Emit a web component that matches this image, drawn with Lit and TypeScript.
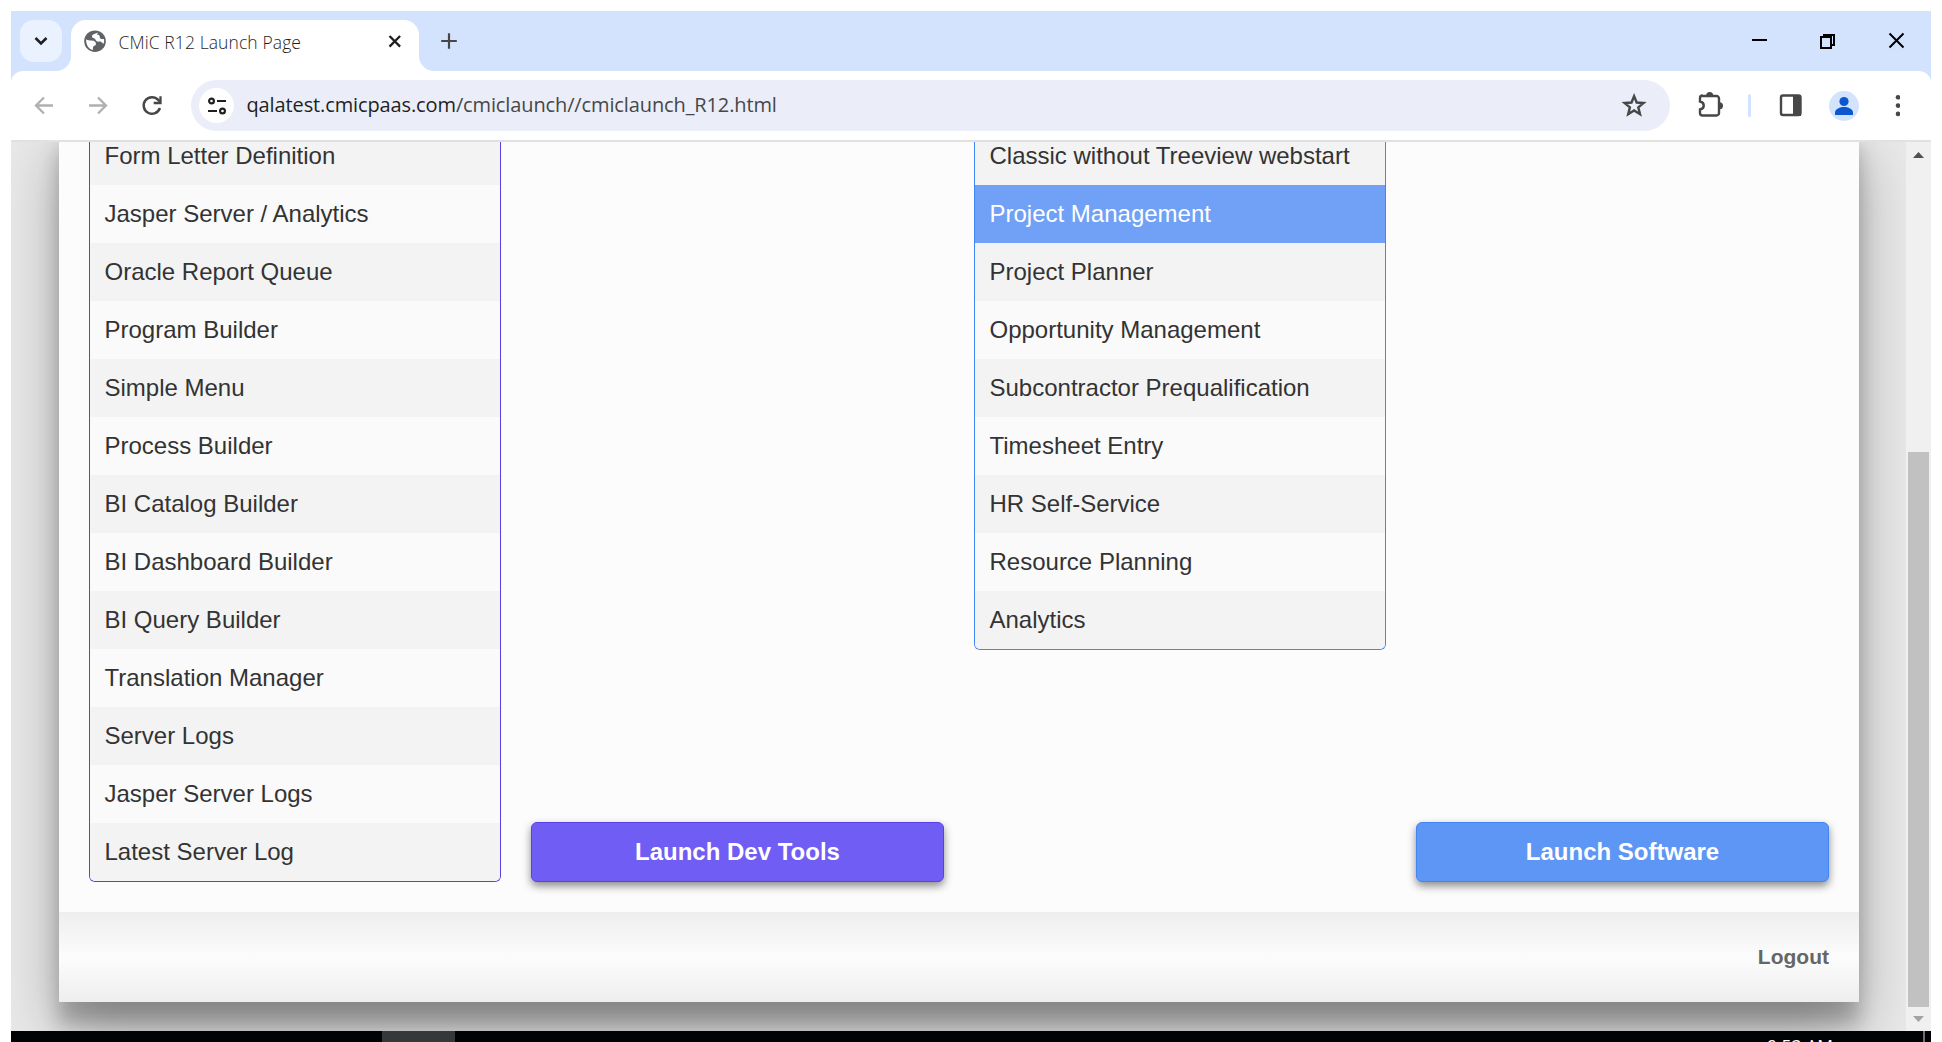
import { LitElement, html, css } from "lit";
import { customElement, property } from "lit/decorators.js";
import { classMap } from "lit/directives/class-map.js";

@customElement("option-list")
class OptionList extends LitElement {
  @property({ attribute: false }) items: string[] = [];
  @property() selected = "";
  @property() tone = "violet";

  static styles = css`
    :host { display: block; }
    .list {
      border: 1px solid #5b40ea;
      border-radius: 0 0 6px 6px;
      border-top: 0;
      overflow: hidden;
      width: 412px;
      box-sizing: border-box;
    }
    .list.blue { border-color: #4285f4; }
    .row {
      height: 58px;
      line-height: 58px;
      padding-left: 14.5px;
      background: #fafafa;
      color: #333;
      font-size: 24px;
      white-space: nowrap;
    }
    .row:nth-child(odd) { background: #f3f3f3; }
    .row.active { background: #70a1f6; color: #fff; }
  `;

  render() {
    return html`<div class=${classMap({ list: true, blue: this.tone === "blue" })}>
      ${this.items.map(
        (t) => html`<div class=${classMap({ row: true, active: t === this.selected })}>${t}</div>`
      )}
    </div>`;
  }
}

@customElement("browser-chrome")
class BrowserChrome extends LitElement {
  static styles = css`
    :host { display: block; font-family: "Open Sans", "Noto Sans", sans-serif; }
    svg { display: block; flex: none; }
    .strip {
      height: 60px;
      background: #d3e3fd;
      display: flex;
      align-items: flex-start;
    }
    .search {
      width: 42px;
      height: 42px;
      margin: 9px 9px 0 9px;
      border-radius: 14px;
      background: #ebf2ff;
      flex: none;
    }
    .tab {
      position: relative;
      width: 348px;
      height: 51px;
      margin-top: 9px;
      background: #fff;
      border-radius: 15px 15px 0 0;
      display: flex;
      align-items: flex-start;
      flex: none;
      box-sizing: border-box;
      padding: 10px 15px 0 12px;
    }
    .tab::before,
    .tab::after {
      content: "";
      position: absolute;
      bottom: 0;
      width: 15px;
      height: 15px;
    }
    .tab::before { left: -15px; background: radial-gradient(circle at 0 0, transparent 14.5px, #fff 15.5px); }
    .tab::after { right: -15px; background: radial-gradient(circle at 100% 0, transparent 14.5px, #fff 15.5px); }
    .title {
      margin: 0 0 0 11.500px;
      font-size: 17.5px;
      line-height: 24px;
      font-weight: 300;
      letter-spacing: 0.1px;
      color: #1f1f1f;
      white-space: nowrap;
      flex: 1;
    }
    .close { margin-top: 3px; }
    .plus { margin: 21px 0 0 21px; }
    .grow { flex: 1; }
    .win { margin-top: 21px; }
    .corner { background: #d3e3fd; }
    .toolbar {
      height: 69px;
      background: #fff;
      border-radius: 12px 12px 0 0;
      border-bottom: 2px solid #e1e1e1;
      display: flex;
      align-items: flex-start;
    }
    .nav { margin-top: 20px; display: flex; padding-left: 18px; gap: 24px; width: 162px; }
    .omni {
      width: 1479px;
      height: 51px;
      margin-top: 9px;
      background: #ebeef8;
      border-radius: 26px;
      display: flex;
      align-items: center;
      box-sizing: border-box;
      padding: 0 22px 0 8px;
      flex: none;
    }
    .chip {
      width: 35px;
      height: 35px;
      border-radius: 50%;
      background: #fff;
      display: flex;
      align-items: center;
      justify-content: center;
    }
    .url {
      margin: -2px 0 0 12.5px;
      flex: 1;
      font-size: 20px;
      line-height: 30px;
      color: #474747;
      white-space: nowrap;
      letter-spacing: -0.12px;
    }
    .host { color: #1f1f1f; }
    .tools { display: flex; margin-top: 20px; }
  `;

  render() {
    return html`
      <div class="strip">
        <div class="search">
          <svg width="42" height="42" viewBox="0 0 42 42"><path d="M15.500 18l5.500 5.500 5.500-5.500" fill="none" stroke="#1f1f1f" stroke-width="2.600" /></svg>
        </div>
        <div class="tab">
          <svg width="24" height="24" viewBox="0 0 24 24">
            <circle cx="12" cy="11.200" r="10.800" fill="#5f6368" />
            <path d="M14.500 2.500c-1 1.200-4.600 1.300-5.400 3.200-.4 1.500.6 2.300 1.900 2.500 1.500.2 1.500 2.300 2.700 3.100 1.600.9 3.300-.2 4.700.6 1 .6.900 1.500 2.200 1.600.6-1.400.7-2.900.4-4.300-.8-.6-2.400.2-3.600-.8-1.200-.9-.2-2.300-1.300-3.200-.9-.7-1.800.1-1.900-.8 0-.8.900-1 .3-1.900z" fill="#fff" />
            <path d="M3.100 9.300c1.400 1.400 3.500 1 5.600 1.300 2.500.3 4.300 1.200 4.300 3.200s-1.500 1.700-2.600 2.600c-.8.8-.2 2.300-.7 3.700-3.900-1-6.800-4.900-6.600-10.800z" fill="#fff" />
          </svg>
          <div class="title">CMiC R12 Launch Page</div>
          <svg class="close" width="18" height="18" viewBox="0 0 18 18"><path d="M3.500 3l10.600 10.600M14.100 3L3.500 13.600" stroke="#1f1f1f" stroke-width="2.300" /></svg>
        </div>
        <svg class="plus" width="18" height="18" viewBox="0 0 18 18"><path d="M9 1.200v15.600M1.200 9h15.600" stroke="#474747" stroke-width="2.200" /></svg>
        <div class="grow"></div>
        <svg class="win" width="180" height="18" viewBox="0 0 180 18">
          <path d="M1 8h15" stroke="#000" stroke-width="2" />
          <path d="M70 5h10v11h-10zM73 5V3h10v10h-3" fill="none" stroke="#000" stroke-width="2" />
          <path d="M138.500 1.500l14 14M152.500 1.500l-14 14" stroke="#000" stroke-width="2" />
        </svg>
      </div>
      <div class="corner">
        <div class="toolbar">
          <div class="nav">
            <svg width="30" height="30" viewBox="0 0 30 30"><path d="M24 14.500H7.500M15 6.500l-8 8 8 8" fill="none" stroke="#b0b0b0" stroke-width="2.300" /></svg>
            <svg width="30" height="30" viewBox="0 0 30 30"><path d="M6 14.500h16.500M15 6.500l8 8-8 8" fill="none" stroke="#b0b0b0" stroke-width="2.300" /></svg>
            <svg width="30" height="30" viewBox="0 0 30 30"><path d="M22.900 17a8.300 8.300 0 1 1-1.700-8.100l2.300 2.300" fill="none" stroke="#474747" stroke-width="2.500" /><path d="M23.500 5.300v6.700h-6.800" fill="none" stroke="#474747" stroke-width="2.300" /></svg>
          </div>
          <div class="omni">
            <div class="chip">
              <svg width="20" height="18" viewBox="0 0 20 18"><g fill="none" stroke="#1f1f1f" stroke-width="2.200"><circle cx="4.500" cy="4" r="2.400" /><path d="M10 4h9M1 14h9" /><circle cx="15.500" cy="14" r="2.400" /></g></svg>
            </div>
            <div class="url"><span class="host">qalatest.cmicpaas.com</span>/cmiclaunch//cmiclaunch_R12.html</div>
            <svg width="28" height="28" viewBox="0 0 28 28"><path d="M14.100 4.100l2.600 6.400 6.900.5-5.300 4.400 1.700 6.800-5.900-3.700-5.900 3.700 1.700-6.800-5.300-4.400 6.900-.5z" fill="none" stroke="#474747" stroke-width="2.400" /></svg>
          </div>
          <svg class="tools" width="230" height="32" viewBox="1670 91 230 32">
            <path d="M1701 96h15.500a2.500 2.500 0 0 1 2.500 2.500v14.500a2.500 2.500 0 0 1-2.500 2.500h-14a2.500 2.500 0 0 1-2.500-2.500v-3.500c5-1 5-7 0-8v-3.500a2.500 2.500 0 0 1 2.500-2.500z" fill="none" stroke="#474747" stroke-width="2.400" />
            <path d="M1706.200 95.500a3.500 3.500 0 0 1 7 0zM1719.500 102.300a3.500 3.500 0 0 1 0 7z" fill="#474747" />
            <rect x="1748" y="94" width="3" height="23" rx="1.500" fill="#d3e3fd" />
            <rect x="1781" y="95.500" width="19.500" height="19.500" rx="2" fill="none" stroke="#474747" stroke-width="2.400" />
            <path d="M1793 95h8v21h-8z" fill="#474747" />
            <circle cx="1844" cy="106" r="15" fill="#d3e3fd" />
            <circle cx="1844" cy="101.500" r="4.600" fill="#0b57d0" />
            <path d="M1835 115v-2.500c0-3.500 5-5.500 9-5.500s9 2 9 5.500v2.500z" fill="#0b57d0" />
            <g fill="#474747"><circle cx="1898" cy="97.300" r="2.300" /><circle cx="1898" cy="105.600" r="2.300" /><circle cx="1898" cy="113.900" r="2.300" /></g>
          </svg>
        </div>
      </div>
    `;
  }
}

@customElement("app-root")
class AppRoot extends LitElement {
  static styles = css`
    :host {
      display: block;
      width: 1942px;
      height: 1042px;
      overflow: hidden;
      background: #fff;
      box-sizing: border-box;
      padding: 11px 11px 0;
      font-family: "Liberation Sans", Arial, sans-serif;
    }
    .view { height: 889px; display: flex; }
    .page {
      flex: 1;
      overflow: hidden;
      background: #e9e9e9;
      padding: 0 47px 0 48px;
      display: flex;
      flex-direction: column;
    }
    .card {
      width: 1800px;
      margin-top: -15px;
      background: #fcfcfc;
      box-shadow: 0 28px 57px rgba(0, 0, 0, 0.3), 0 22px 18px rgba(0, 0, 0, 0.22);
    }
    .cols {
      display: grid;
      grid-template-columns: 412px 413px 412px 413px;
      column-gap: 30px;
      padding: 0 30px 30px;
      height: 785px;
      box-sizing: border-box;
    }
    .second { padding-left: 1px; }
    .btn {
      align-self: end;
      height: 60px;
      box-sizing: border-box;
      border: 1px solid #5b40ea;
      border-radius: 6px;
      background: #705df3;
      color: #fff;
      font-size: 24px;
      font-weight: 700;
      line-height: 58px;
      text-align: center;
      box-shadow: 0 4px 9px rgba(0, 0, 0, 0.45);
    }
    .btn.blue { background: #5e96f5; border-color: #4285f4; }
    .foot {
      height: 90px;
      background: linear-gradient(#eee, #fcfcfc 50%, #eee);
      display: flex;
      align-items: center;
      justify-content: flex-end;
      padding-right: 30px;
      box-sizing: border-box;
      font-size: 21px;
      font-weight: 700;
      color: #666;
    }
    .bar {
      width: 25px;
      background: #f0f0f0;
      display: flex;
      flex-direction: column;
      align-items: center;
    }
    .bar svg { display: block; }
    .gap { height: 285px; }
    .thumb { width: 21px; height: 555px; background: #c1c1c1; }
    .task {
      height: 11px;
      background: #000205;
      display: flex;
      overflow: hidden;
    }
    .active { width: 73px; margin-left: 371px; background: #36373b; }
    .clock {
      margin: 3px 0 0 1312px;
      width: 70px;
      font: 17.5px/24px "Open Sans", sans-serif;
      color: #fff;
      white-space: nowrap;
    }
    .edge { width: 2px; margin-left: 86px; background: #6d6e70; }
  `;

  private dev = [
    "Form Letter Definition", "Jasper Server / Analytics", "Oracle Report Queue", "Program Builder",
    "Simple Menu", "Process Builder", "BI Catalog Builder", "BI Dashboard Builder", "BI Query Builder",
    "Translation Manager", "Server Logs", "Jasper Server Logs", "Latest Server Log",
  ];
  private apps = [
    "Classic without Treeview webstart", "Project Management", "Project Planner", "Opportunity Management",
    "Subcontractor Prequalification", "Timesheet Entry", "HR Self-Service", "Resource Planning", "Analytics",
  ];

  render() {
    return html`
      <browser-chrome></browser-chrome>
      <div class="view">
        <div class="page">
          <div class="card">
            <div class="cols">
              <option-list .items=${this.dev}></option-list>
              <div class="btn">Launch Dev Tools</div>
              <option-list .items=${this.apps} tone="blue" selected="Project Management"></option-list>
              <div class="btn blue">Launch Software</div>
            </div>
            <div class="foot">Logout</div>
          </div>
        </div>
        <div class="bar">
          <svg width="25" height="25" viewBox="0 0 25 25"><path d="M7 16l5.500-6 5.500 6z" fill="#505050" /></svg>
          <div class="gap"></div>
          <div class="thumb"></div>
          <svg width="25" height="24" viewBox="0 0 25 24"><path d="M7 9l5.500 6 5.500-6z" fill="#a3a3a3" /></svg>
        </div>
      </div>
      <div class="task">
        <div class="active"></div>
        <div class="clock">9:53 AM</div>
        <div class="edge"></div>
      </div>
    `;
  }
}
